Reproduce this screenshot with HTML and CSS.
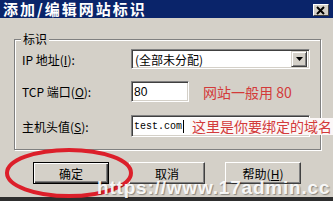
FILE: index.html
```html
<!DOCTYPE html>
<html lang="zh-CN">
<head>
<meta charset="utf-8">
<title>添加/编辑网站标识</title>
<link rel="stylesheet" href="styles.css">
</head>
<body>
<div class="window">
  <div class="titlebar">
    <span class="title">添加/编辑网站标识</span>
    <span class="close"><svg width="10" height="9" viewBox="0 0 10 9"><path d="M1 1 L8 8 M8 1 L1 8" stroke="#000" stroke-width="2" fill="none"/></svg></span>
  </div>
  <div class="content">
    <div class="group">
      <span class="legend">标识</span>
      <div class="row r1">
        <span class="lbl">IP 地址(<u>I</u>):</span>
        <div class="select">
          <span class="sel-text">(全部未分配)</span>
          <span class="sel-btn"><svg width="7" height="4" viewBox="0 0 7 4"><path d="M0 0 H7 L3.5 4 Z" fill="#000"/></svg></span>
        </div>
      </div>
      <div class="row r2">
        <span class="lbl">TCP 端口(<u>O</u>):</span>
        <div class="field port"><span class="val">80</span></div>
        <span class="note">网站一般用 80</span>
      </div>
      <div class="row r3">
        <span class="lbl">主机头值(<u>S</u>):</span>
        <div class="field host">
          <span class="mono">test.com</span><span class="caret"></span>
          <span class="note over">这里是你要绑定的域名</span>
        </div>
      </div>
    </div>
    <div class="buttons">
      <span class="btn default"><span class="btn-in">确定</span></span>
      <span class="btn"><span class="btn-in">取消</span></span>
      <span class="btn"><span class="btn-in">帮助(<u>H</u>)</span></span>
    </div>
  </div>
  <div class="bottombar"></div>
  <svg class="ellipse" width="333" height="201" viewBox="0 0 333 201"><ellipse cx="69" cy="173" rx="62" ry="23" fill="none" stroke="#dc1f2a" stroke-width="4"/></svg>
  <div class="watermark">https://www.17admin.cc</div>
</div>
</body>
</html>
```
FILE: styles.css
```css
html, body {
  margin: 0;
  padding: 0;
}
body {
  width: 333px;
  height: 201px;
  overflow: hidden;
  background: #d4d0c8;
  font-family: "Noto Sans CJK SC", "Liberation Sans", sans-serif;
  font-size: 12px;
  color: #000;
}
.window {
  position: relative;
  width: 333px;
  height: 201px;
  display: flex;
  flex-direction: column;
  background: #d4d0c8;
}
.titlebar {
  height: 18px;
  flex: none;
  background: #0a246a;
  display: flex;
  align-items: center;
  justify-content: space-between;
  padding: 0 4px 0 3px;
}
.title {
  display: block;
  color: #fff;
  font-weight: bold;
  font-size: 15px;
  letter-spacing: 2px;
  line-height: 16px;
  white-space: nowrap;
}
.close {
  width: 16px;
  height: 12px;
  box-sizing: border-box;
  background: #d4d0c8;
  border-top: 1px solid #fff;
  border-left: 1px solid #fff;
  border-right: 1px solid #404040;
  border-bottom: 1px solid #404040;
  display: flex;
  align-items: center;
  justify-content: center;
  margin-top: 2px;
}
.content {
  padding: 0 12px 0 14px;
}
.group {
  position: relative;
  margin-top: 21px;
  width: 307px;
  box-sizing: border-box;
  border: 1px solid #808080;
  box-shadow: inset 1px 1px 0 #fff, 1px 1px 0 #fff;
  padding: 9px 0 12px 7px;
}
.legend {
  position: absolute;
  left: 6px;
  top: -8px;
  padding: 0 2px;
  background: #d4d0c8;
  line-height: 14px;
}
.row {
  display: flex;
  align-items: center;
  position: relative;
}
.r1 { height: 20px; }
.r2 { height: 21px; margin-top: 12px; }
.r3 { height: 22px; margin-top: 13px; }
.lbl {
  width: 109px;
  flex: none;
  white-space: nowrap;
}
.select, .field {
  box-sizing: border-box;
  height: 100%;
  background: #fff;
  border-top: 1px solid #808080;
  border-left: 1px solid #808080;
  border-right: 1px solid #fff;
  border-bottom: 1px solid #fff;
  box-shadow: inset 1px 1px 0 #404040, inset -1px -1px 0 #d4d0c8;
  display: flex;
  align-items: center;
  position: relative;
}
.select {
  width: 179px;
  padding: 0 2px 0 3px;
  justify-content: space-between;
}
.sel-text {
  white-space: nowrap;
}
.sel-btn {
  width: 16px;
  height: 16px;
  box-sizing: border-box;
  background: #d4d0c8;
  border-top: 1px solid #d4d0c8;
  border-left: 1px solid #d4d0c8;
  border-right: 1px solid #404040;
  border-bottom: 1px solid #404040;
  box-shadow: inset 1px 1px 0 #fff, inset -1px -1px 0 #808080;
  display: flex;
  align-items: center;
  justify-content: center;
}
.port {
  width: 58px;
  padding-left: 2px;
}
.val {
  font-family: "Liberation Sans", sans-serif;
  font-size: 12px;
}
.note {
  color: #d33a3a;
  font-size: 14px;
  white-space: nowrap;
  margin-left: 14px;
  line-height: 16px;
}
.host {
  width: 179px;
  padding-left: 2px;
}
.mono {
  font-family: "Liberation Mono", monospace;
  font-size: 10px;
}
.caret {
  width: 1px;
  height: 13px;
  background: #000;
  margin-left: 1px;
}
.note.over {
  position: absolute;
  left: 58px;
  top: 2px;
  margin: 0;
  padding: 0 1px 0 2px;
  background: #fbf7f7;
  line-height: 17px;
}
.buttons {
  display: flex;
  gap: 20px;
  margin: 12px 0 0 19px;
}
.btn {
  width: 76px;
  height: 22px;
  box-sizing: border-box;
  background: #d4d0c8;
  border-top: 1px solid #fff;
  border-left: 1px solid #fff;
  border-right: 1px solid #404040;
  border-bottom: 1px solid #404040;
  box-shadow: inset -1px -1px 0 #808080;
  display: flex;
}
.btn.default {
  border: 1px solid #000;
  box-shadow: inset 1px 1px 0 #fff, inset -1px -1px 0 #404040, inset -2px -2px 0 #808080;
}
.btn-in {
  flex: 1;
  display: flex;
  align-items: center;
  justify-content: center;
  white-space: nowrap;
}
.bottombar {
  margin-top: auto;
  height: 4px;
  background: #2e2e2e;
}
.ellipse {
  position: absolute;
  left: 0;
  top: 0;
  pointer-events: none;
}
.watermark {
  position: absolute;
  left: 97px;
  top: 178px;
  font-family: "Liberation Sans", sans-serif;
  font-weight: bold;
  font-size: 19px;
  line-height: 19px;
  letter-spacing: 0.8px;
  color: rgba(255, 255, 255, 0.92);
  text-shadow: 1px 1px 1px rgba(0, 0, 0, 0.35);
  white-space: nowrap;
  pointer-events: none;
}
```
